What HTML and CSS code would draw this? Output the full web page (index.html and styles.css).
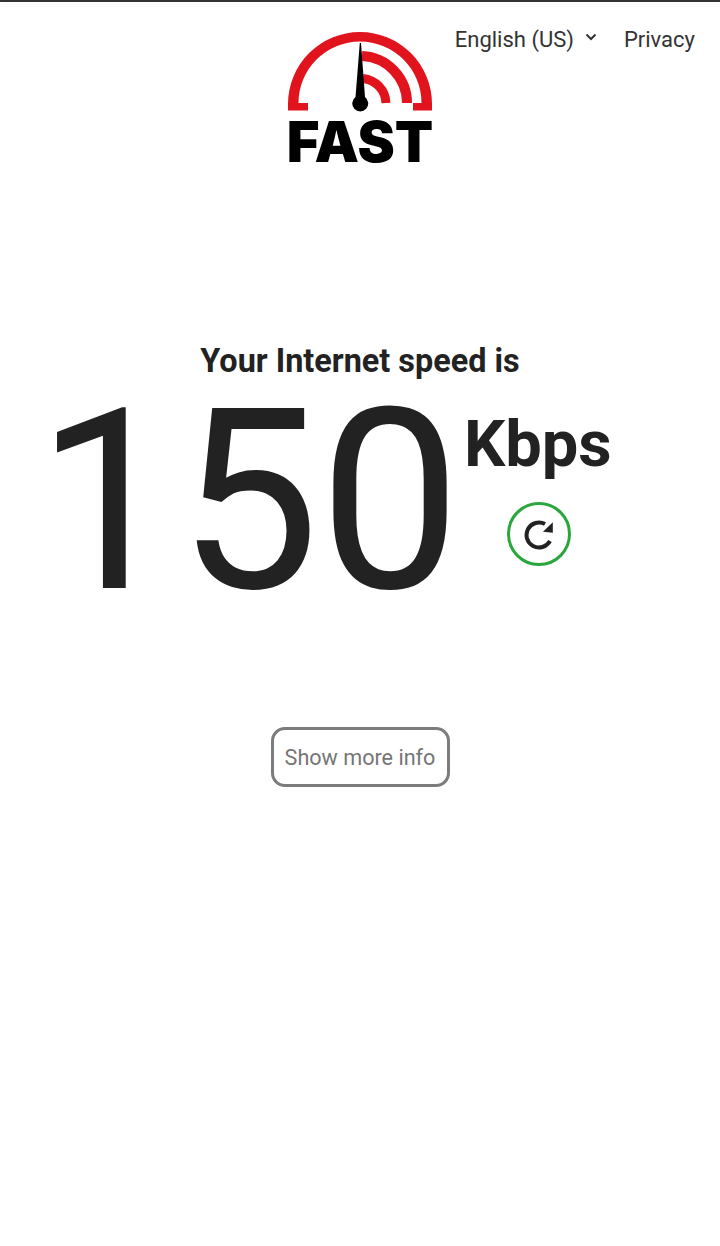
FILE: index.html
```html
<!DOCTYPE html>
<html lang="en">
<head>
<meta charset="utf-8">
<title>Fast</title>
<link rel="stylesheet" href="styles.css">
</head>
<body>
<div class="top-edge"></div>
<header class="header">
  <div class="logo">
    <svg class="logo-mark" width="146" height="84" viewBox="287 30 146 84">
      <path class="arc" d="M288 110.500 V104 A72 72 0 0 1 432 104 V110.500 H413 V103 H421.500 A61.500 61.500 0 0 0 298.500 103 H308 V110.500 Z"/>
      <path class="arc-inner" d="M362 56 A47 47 0 0 1 407 103"/>
      <path class="arc-inner small" d="M363 78.500 A25.500 25.500 0 0 1 386 103"/>
      <path class="needle" d="M359.800 43 L361 43 L365 97 A8 8 0 1 1 355.500 97 Z"/>
    </svg>
    <div class="logo-text">FAST</div>
  </div>
  <nav class="nav">
    <span class="lang">English (US)
      <svg class="chev" width="12" height="8" viewBox="0 0 12 8"><path d="M1.500 1.500 L6 6 L10.500 1.500"/></svg>
    </span>
    <span>Privacy</span>
  </nav>
</header>
<main class="main">
  <div class="title">Your Internet speed is</div>
  <div class="result">
    <div class="speed">150</div>
    <div class="side">
      <div class="unit">Kbps</div>
      <div class="refresh">
        <svg width="32" height="32" viewBox="0 0 32 32"><path class="ref-arc" d="M27 23 A12.500 12.500 0 1 1 22 6"/><path class="ref-head" d="M20 13.700 L29.800 14.700 L29.800 4.300 Z"/></svg>
      </div>
    </div>
  </div>
  <button class="more">Show more info</button>
</main>
</body>
</html>
```
FILE: styles.css
```css
* { box-sizing: border-box; }
html, body { margin: 0; padding: 0; background: #fff; }
body { width: 720px; height: 1246px; overflow: hidden; font-family: Roboto, sans-serif; color: #222; position: relative; }
.top-edge { height: 2px; background: #333; box-shadow: 0 4px 6px rgba(0,0,0,.05); }
.header { height: 172px; display: flex; justify-content: center; padding-top: 28px; position: relative; }
.logo { display: flex; flex-direction: column; align-items: center; width: 146px; }
.logo-mark { display: block; }
.arc { fill: #e1141e; }
.arc-inner { fill: none; stroke: #e1141e; stroke-width: 10; }
.arc-inner.small { stroke-width: 9; }
.needle { fill: #000; }
.logo-text { font-family: Inter, sans-serif; font-weight: 900; font-size: 56px; line-height: 42px; color: #000; letter-spacing: 0; margin-top: 7px; white-space: nowrap; }
.nav { position: absolute; top: 22px; right: 25px; display: flex; gap: 27px; font-size: 22px; line-height: 32px; color: #333; }
.lang { display: flex; align-items: center; gap: 11px; }
.chev { margin-top: -6px; }
.chev path { fill: none; stroke: #333; stroke-width: 2; }
.main { display: flex; flex-direction: column; align-items: center; }
.title { font-size: 32.400px; font-weight: 700; line-height: 40px; margin-top: 167px; color: #222; }
.result { display: flex; width: 720px; padding-left: 36px; height: 229px; }
.speed { font-size: 252px; font-weight: 400; line-height: 234px; color: #222; margin-top: 4px; }
.side { display: flex; flex-direction: column; align-items: center; margin-left: 3px; padding-top: 25px; }
.unit { font-size: 65px; font-weight: 700; line-height: 76px; color: #222; }
.refresh { width: 64px; height: 64px; border: 3px solid #2aa63c; border-radius: 50%; display: flex; align-items: center; justify-content: center; margin-top: 20px; margin-left: 3px; }
.ref-arc { fill: none; stroke: #222; stroke-width: 4; }
.ref-head { fill: #222; }
.more { margin-top: 117px; width: 179px; height: 60px; border: 3px solid #7c7c7c; border-radius: 14px; background: #fff; font-family: Roboto, sans-serif; font-size: 21.600px; color: #757575; padding: 0; }
```
